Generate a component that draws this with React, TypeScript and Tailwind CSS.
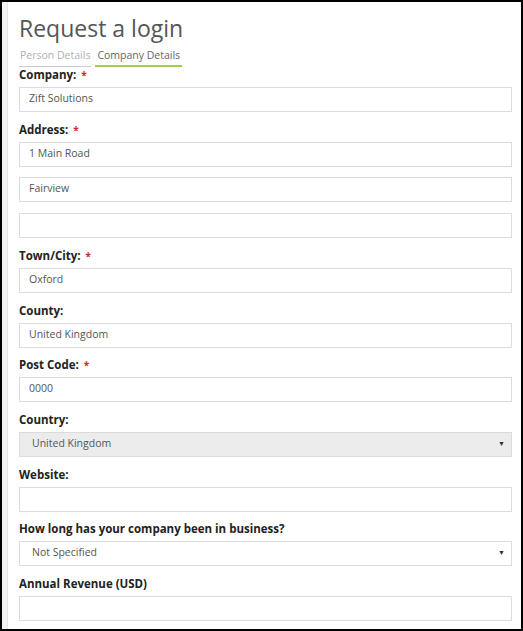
import React from "react";

const Label = ({ text, required }: { text: string; required?: boolean }) => (
    <label className="block h-[14px] mb-[5px] text-[11.5px] leading-[14px] font-bold text-[#222]">
        {text}
        {required && <span className="ml-[5px] text-[10px] align-top text-[#d9262b]">*</span>}
    </label>
);

const Input = ({ value, className = "" }: { value?: string; className?: string }) => (
    <div
        className={
            "h-[25px] border border-[#dcdcdc] bg-white pl-[9px] flex items-center text-[10.5px] text-[#555] " +
            className
        }
    >
        {value}
    </div>
);

const Select = ({ value, disabled }: { value: string; disabled?: boolean }) => (
    <div
        className={
            "h-[25px] border border-[#dcdcdc] pl-[12px] pr-[6px] flex items-center justify-between text-[10.5px] text-[#555] " +
            (disabled ? "bg-[#ececec]" : "bg-white")
        }
    >
        <span>{value}</span>
        <span className="text-[7px] text-[#333]">▼</span>
    </div>
);

const App = () => {
    return (
        <div
            className="w-[523px] h-[631px] border-2 border-black bg-white flex overflow-hidden"
            style={{ fontFamily: "'Open Sans', sans-serif" }}
        >
            <div className="w-[6px] shrink-0 bg-[#f2f2f2] border-r border-[#e6e6e6]" />
            <div className="flex-1 pl-[11px] pr-[9px]">
                <h1 className="mt-[10px] h-[32px] text-[23px] leading-[32px] text-[#555] font-normal">
                    Request a login
                </h1>
                <div className="mt-[4px] flex gap-[4px] text-[10.5px]">
                    <div className="px-[1px] pb-[1px] text-[#b0b0b0] border-b border-[#cfcfcf]">
                        Person Details
                    </div>
                    <div className="px-[2px] pb-[1px] text-[#666] border-b-2 border-[#a4cf4a]">
                        Company Details
                    </div>
                </div>

                <div className="mt-[1px]">
                    <Label text="Company:" required />
                    <Input value="Zift Solutions" />
                </div>
                <div className="mt-[11px]">
                    <Label text="Address:" required />
                    <Input value="1 Main Road" />
                    <Input value="Fairview" className="mt-[10px]" />
                    <Input className="mt-[11px]" />
                </div>
                <div className="mt-[11px]">
                    <Label text="Town/City:" required />
                    <Input value="Oxford" />
                </div>
                <div className="mt-[11px]">
                    <Label text="County:" />
                    <Input value="United Kingdom" />
                </div>
                <div className="mt-[10px]">
                    <Label text="Post Code:" required />
                    <Input value="0000" />
                </div>
                <div className="mt-[11px]">
                    <Label text="Country:" />
                    <Select value="United Kingdom" disabled />
                </div>
                <div className="mt-[11px]">
                    <Label text="Website:" />
                    <Input />
                </div>
                <div className="mt-[10px]">
                    <Label text="How long has your company been in business?" />
                    <Select value="Not Specified" />
                </div>
                <div className="mt-[11px]">
                    <Label text="Annual Revenue (USD)" />
                    <Input />
                </div>
            </div>
        </div>
    );
};

export default App;
